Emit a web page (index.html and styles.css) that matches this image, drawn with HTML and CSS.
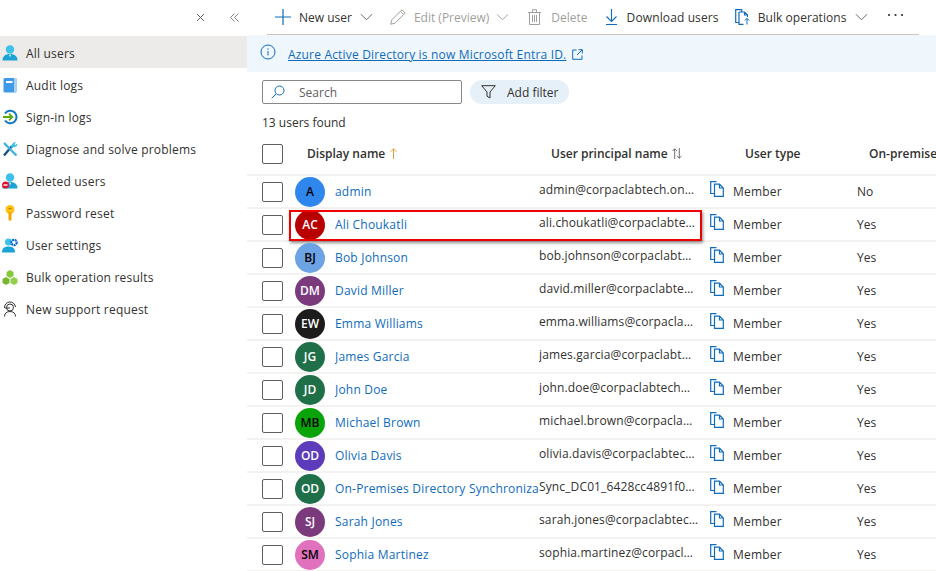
FILE: index.html
```html
<!DOCTYPE html>
<html lang="en">
<head>
<meta charset="utf-8">
<title>Users</title>
<link rel="stylesheet" href="styles.css">
</head>
<body>
<svg class="defs" width="0" height="0" aria-hidden="true">
  <symbol id="copy" viewBox="0 0 14 16"><path d="M4.500 12.500H.7V.7h5.800M4.500 3.200h5l3.800 3.800v8.300H4.500zM9.500 3.200V7h3.800" fill="none" stroke="#0f6cbd" stroke-width="1.200"/></symbol>
  <symbol id="chev" viewBox="0 0 14 8"><path d="M1 1l6 6 6-6" fill="none" stroke="currentColor" stroke-width="1"/></symbol>
  <symbol id="person" viewBox="0 0 16 16"><circle cx="8" cy="4.500" r="4.200" fill="#3cc1e8"/><path d="M.5 15.500c0-4 2.500-6.500 7.500-6.500s7.500 2.500 7.500 6.500z" fill="#1aa3d6"/><path d="M7 9.500h2l-1 3z" fill="#e8f7fc"/></symbol>
</svg>
<div class="app">
  <aside class="side">
    <div class="side-top">
      <svg class="ic-close" width="9" height="9" viewBox="0 0 9 9"><path d="M1 1l7 7M8 1L1 8" stroke="#605e5c" fill="none"/></svg>
      <svg class="ic-collapse" width="9" height="9" viewBox="0 0 9 9"><path d="M4.500.5L.5 4.500l4 4M8.500.5l-4 4 4 4" stroke="#8a8886" fill="none"/></svg>
    </div>
    <nav class="nav">
      <a class="nav-item active"><svg class="nav-ic" viewBox="0 0 16 16"><use href="#person"/></svg>All users</a>
      <a class="nav-item"><svg class="nav-ic" viewBox="0 0 16 16"><rect x="1.500" y="1" width="13" height="14.500" rx="1.500" fill="#3f9be8"/><rect x="12" y="1" width="2.500" height="14.500" fill="#a9d3f5"/><rect x="4" y="4" width="6.500" height="2" fill="#fff"/></svg>Audit logs</a>
      <a class="nav-item"><svg class="nav-ic" viewBox="0 0 16 16"><path d="M3 4.500A6.300 6.300 0 1 1 3 11.500" fill="none" stroke="#0f78c9" stroke-width="2"/><path d="M1 8h9M7 4.700L10.300 8 7 11.300" fill="none" stroke="#5ea80f" stroke-width="1.800"/></svg>Sign-in logs</a>
      <a class="nav-item"><svg class="nav-ic" viewBox="0 0 16 16"><path d="M2 14.500L10 5" stroke="#1b4f8a" stroke-width="2.400"/><path d="M10 7l-1.500-1.800L11.500 1.500l2.500-.5-1.500 2 1 1 2-1.500-.5 2.500z" fill="#3cc1e8"/><path d="M2 2l12.500 12.500" stroke="#3cb4e0" stroke-width="2.400"/></svg>Diagnose and solve problems</a>
      <a class="nav-item"><svg class="nav-ic" viewBox="0 0 16 16"><use href="#person"/><circle cx="3.500" cy="12" r="3.500" fill="#e0122e"/><rect x="1.500" y="11.300" width="4" height="1.400" fill="#fff"/></svg>Deleted users</a>
      <a class="nav-item"><svg class="nav-ic" viewBox="0 0 16 16"><circle cx="8" cy="4.500" r="4.500" fill="#fcc419"/><path d="M6.500 7h3v8l-1.500 1-1.500-1z" fill="#f7a800"/><rect x="6.500" y="2.800" width="3" height="1.400" fill="#b97f00"/></svg>Password reset</a>
      <a class="nav-item"><svg class="nav-ic" viewBox="0 0 16 16"><circle cx="6.500" cy="5" r="3.500" fill="#3cc1e8"/><path d="M0 15.500c0-4 2-6 6.500-6s6.500 2 6.500 6z" fill="#1aa3d6"/><circle cx="12" cy="5.500" r="2.700" fill="none" stroke="#0f6cd4" stroke-width="2.200" stroke-dasharray="2 .6"/></svg>User settings</a>
      <a class="nav-item"><svg class="nav-ic" viewBox="0 0 16 16"><path d="M8 1l3.500 2v4L8 9 4.500 7V3z" fill="#86c83c"/><path d="M4 8l3.500 2v4L4 16 .5 14v-4z" fill="#75b82e"/><path d="M12 8l3.500 2v4L12 16l-3.500-2v-4z" fill="#93d04a"/></svg>Bulk operation results</a>
      <a class="nav-item"><svg class="nav-ic" viewBox="0 0 16 16" fill="none" stroke="#323130"><circle cx="8" cy="6.500" r="3.500"/><path d="M2.500 7A5.500 5.500 0 0 1 13.500 6M2.500 15.500c0-3 2-5 5.500-5s5.500 2 5.500 5M3 7h5"/></svg>New support request</a>
    </nav>
  </aside>
  <main class="main">
    <div class="toolbar">
      <span class="tool t-new"><svg width="16" height="16" viewBox="0 0 16 16"><path d="M8 0v16M0 8h16" stroke="#0f6cbd" stroke-width="1.200"/></svg>New user<svg class="chev" width="13" height="8"><use href="#chev"/></svg></span>
      <span class="tool off t-edit"><svg width="16" height="16" viewBox="0 0 16 16"><path d="M.8 15.200l1-4.500L12 .8l3.200 3.200L5 14.200zM10.500 2.300l3.200 3.200" fill="none" stroke="#a19f9d"/></svg>Edit (Preview)<svg class="chev" width="13" height="8"><use href="#chev"/></svg></span>
      <span class="tool off t-del"><svg width="13" height="16" viewBox="0 0 13 16"><path d="M1.500 3.500h10v12h-10zM0 3.500h13M4.500 3V.7h4V3M4.500 6v7M6.500 6v7M8.500 6v7" fill="none" stroke="#a19f9d"/></svg>Delete</span>
      <span class="tool t-down"><svg width="13" height="16" viewBox="0 0 13 16"><path d="M6.500 0v12M1.500 7.500l5 5 5-5M1 15.500h11" fill="none" stroke="#0f6cbd" stroke-width="1.100"/></svg>Download users</span>
      <span class="tool t-bulk"><svg width="15" height="16" viewBox="0 0 15 16"><path d="M4 13.500H.7V.7h6v2M4 3h5.500l3 3v2M4 3v12.300h4.500M9.500 3v3h3" fill="none" stroke="#0f6cbd" stroke-width="1.200"/><path d="M12 15.500V9.500M9.800 11.500L12 9.300l2.200 2.200" fill="none" stroke="#0f6cbd"/></svg>Bulk operations<svg class="chev" width="13" height="8"><use href="#chev"/></svg></span>
      <svg class="more" width="17" height="4" viewBox="0 0 17 4"><circle cx="2" cy="2" r="1.100" fill="#323130"/><circle cx="8.500" cy="2" r="1.100" fill="#323130"/><circle cx="15" cy="2" r="1.100" fill="#323130"/></svg>
    </div>
    <div class="banner">
      <svg class="info" width="16" height="16" viewBox="0 0 16 16"><circle cx="8" cy="8" r="7" fill="none" stroke="#0f6cbd"/><path d="M8 7v4.500M8 4.300v1.400" stroke="#0f6cbd"/></svg>
      <a class="banner-link">Azure Active Directory is now Microsoft Entra ID.</a>
      <svg width="11" height="11" viewBox="0 0 11 11"><path d="M4.500 1H.7v9.300H10V6.500M5 6l5-5M6.500.7h3.800v3.800" fill="none" stroke="#0f6cbd"/></svg>
    </div>
    <div class="filters">
      <label class="search"><svg width="14" height="14" viewBox="0 0 14 14"><circle cx="8.500" cy="5.500" r="4.500" fill="none" stroke="#0f6cbd"/><path d="M5.200 8.800L.7 13.300" stroke="#0f6cbd"/></svg><span>Search</span></label>
      <span class="pill"><svg width="15" height="14" viewBox="0 0 15 14"><path d="M.7.700h13.600L9 7v6l-3-1.800V7z" fill="none" stroke="#323130"/></svg>Add filter</span>
    </div>
    <div class="count">13 users found</div>
    <div class="head">
      <span class="box"></span>
      <span class="h-name">Display name<svg class="arr" width="7" height="11" viewBox="0 0 7 11"><path d="M3.500 11V.8M.5 3.800l3-3 3 3" fill="none" stroke="#e0a040"/></svg></span>
      <span class="h-upn">User principal name<svg class="arr" width="10" height="11" viewBox="0 0 10 11"><path d="M2.700 11V.8M.5 3l2.200-2.200L4.900 3M7.300 0v10.200M5.100 8l2.200 2.200L9.500 8" fill="none" stroke="#605e5c" stroke-width=".9"/></svg></span>
      <span class="h-type">User type</span>
      <span class="h-prem">On-premises sync enabled</span>
    </div>
    <div class="row"><span class="box"></span><span class="cell-id"><span class="av a-blue">A</span><a>admin</a></span><span class="upn">admin@corpaclabtech.on&#8230;</span><svg class="copy"><use href="#copy"/></svg><span class="type">Member</span><span class="prem">No</span></div>
    <div class="row"><span class="box"></span><span class="cell-id"><span class="av a-red">AC</span><a>Ali Choukatli</a></span><span class="upn">ali.choukatli@corpaclabte&#8230;</span><svg class="copy"><use href="#copy"/></svg><span class="type">Member</span><span class="prem">Yes</span><span class="mark"></span></div>
    <div class="row"><span class="box"></span><span class="cell-id"><span class="av a-sky">BJ</span><a>Bob Johnson</a></span><span class="upn">bob.johnson@corpaclabt&#8230;</span><svg class="copy"><use href="#copy"/></svg><span class="type">Member</span><span class="prem">Yes</span></div>
    <div class="row"><span class="box"></span><span class="cell-id"><span class="av a-plum">DM</span><a>David Miller</a></span><span class="upn">david.miller@corpaclabte&#8230;</span><svg class="copy"><use href="#copy"/></svg><span class="type">Member</span><span class="prem">Yes</span></div>
    <div class="row"><span class="box"></span><span class="cell-id"><span class="av a-black">EW</span><a>Emma Williams</a></span><span class="upn">emma.williams@corpacla&#8230;</span><svg class="copy"><use href="#copy"/></svg><span class="type">Member</span><span class="prem">Yes</span></div>
    <div class="row"><span class="box"></span><span class="cell-id"><span class="av a-green">JG</span><a>James Garcia</a></span><span class="upn">james.garcia@corpaclabt&#8230;</span><svg class="copy"><use href="#copy"/></svg><span class="type">Member</span><span class="prem">Yes</span></div>
    <div class="row"><span class="box"></span><span class="cell-id"><span class="av a-green">JD</span><a>John Doe</a></span><span class="upn">john.doe@corpaclabtech&#8230;</span><svg class="copy"><use href="#copy"/></svg><span class="type">Member</span><span class="prem">Yes</span></div>
    <div class="row"><span class="box"></span><span class="cell-id"><span class="av a-lime">MB</span><a>Michael Brown</a></span><span class="upn">michael.brown@corpacla&#8230;</span><svg class="copy"><use href="#copy"/></svg><span class="type">Member</span><span class="prem">Yes</span></div>
    <div class="row"><span class="box"></span><span class="cell-id"><span class="av a-purple">OD</span><a>Olivia Davis</a></span><span class="upn">olivia.davis@corpaclabtec&#8230;</span><svg class="copy"><use href="#copy"/></svg><span class="type">Member</span><span class="prem">Yes</span></div>
    <div class="row"><span class="box"></span><span class="cell-id"><span class="av a-green">OD</span><a>On-Premises Directory Synchronization Service Account</a></span><span class="upn">Sync_DC01_6428cc4891f0&#8230;</span><svg class="copy"><use href="#copy"/></svg><span class="type">Member</span><span class="prem">Yes</span></div>
    <div class="row"><span class="box"></span><span class="cell-id"><span class="av a-plum">SJ</span><a>Sarah Jones</a></span><span class="upn">sarah.jones@corpaclabtec&#8230;</span><svg class="copy"><use href="#copy"/></svg><span class="type">Member</span><span class="prem">Yes</span></div>
    <div class="row"><span class="box"></span><span class="cell-id"><span class="av a-pink">SM</span><a>Sophia Martinez</a></span><span class="upn">sophia.martinez@corpacl&#8230;</span><svg class="copy"><use href="#copy"/></svg><span class="type">Member</span><span class="prem">Yes</span></div>
  </main>
</div>
</body>
</html>
```
FILE: styles.css
```css
* { box-sizing: border-box; }
html, body { margin: 0; height: 100%; overflow: hidden; background: #fff; }
body { font-family: "Open Sans", "Noto Sans", sans-serif; font-size: 12px; color: #323130; }
.defs { position: absolute; }
.app { display: flex; height: 571px; width: 936px; overflow: hidden; }

.side { flex: 0 0 247px; }
.side-top { height: 36px; display: flex; align-items: center; justify-content: flex-end; padding: 0 8px 2px 0; gap: 25px; }
.nav { display: flex; flex-direction: column; }
.nav-item { display: flex; align-items: center; height: 32px; padding: 2px 0 0 2px; gap: 8px; white-space: nowrap; letter-spacing: .2px; }
.nav-item.active { background: #edebe9; }
.nav-ic { width: 16px; height: 16px; flex: none; }

.main { flex: 1; min-width: 0; overflow: hidden; }
.toolbar { height: 35px; margin: 0 17px 0 20px; padding-left: 8px; border-bottom: 1px solid #c8c6c4; display: flex; align-items: center; white-space: nowrap; }
.tool { display: flex; align-items: center; gap: 8px; }
.tool.off { color: #a19f9d; }
.chev { color: #605e5c; }
.off .chev { color: #a19f9d; }
.t-edit { margin-left: 17px; }
.t-edit .chev { margin-left: -1px; }
.t-del { margin-left: 19px; gap: 10px; }
.t-down { margin-left: 17px; gap: 9px; letter-spacing: .12px; }
.t-bulk { margin-left: 16px; letter-spacing: .05px; }
.t-bulk .chev { margin-left: 1px; }
.more { margin-left: 19px; position: relative; top: -2px; }

.banner { height: 37px; background: #eff6fc; display: flex; align-items: center; padding: 2px 0 0 13px; gap: 6px; }
.info { margin-right: 6px; position: relative; top: -3px; }
.banner-link { color: #0f6cbd; text-decoration: underline; letter-spacing: .18px; }

.filters { display: flex; gap: 8px; margin: 8px 0 0 15px; }
.search { width: 200px; height: 24px; border: 1px solid #8a8886; border-radius: 2px; display: flex; align-items: center; padding-left: 8px; gap: 14px; color: #605e5c; }
.pill { width: 99px; height: 24px; border-radius: 12px; background: #e6f0f9; display: flex; align-items: center; padding-left: 11px; gap: 11px; }
.count { margin: 10px 0 0 15px; height: 18px; line-height: 18px; }

.head, .row { display: grid; grid-template-columns: 15px 33px 244px 171px 23px 124px 1fr; align-items: center; white-space: nowrap; }
.head { height: 42px; margin-top: 2px; padding-bottom: 1px; font-weight: 600; border-bottom: 2px solid #f3f2f1; }
.box { grid-column: 2; width: 21px; height: 20px; border: 1px solid #605e5c; border-radius: 2px; background: #fff; }
.head .h-name { grid-column: 3; padding-left: 12px; display: flex; align-items: center; gap: 5px; }
.head .h-upn { grid-column: 4 / 6; padding-left: 12px; display: flex; align-items: center; gap: 4px; }
.head .h-type { grid-column: 6; padding-left: 12px; }
.head .h-prem { grid-column: 7; padding-left: 12px; overflow: hidden; }

.row { height: 33px; border-bottom: 2px solid #f3f2f1; position: relative; }
.cell-id { grid-column: 3; display: flex; align-items: center; gap: 10px; min-width: 0; overflow: hidden; }
.cell-id a { color: #0f6cbd; overflow: hidden; letter-spacing: .2px; }
.av { flex: none; width: 30px; height: 30px; border-radius: 50%; display: flex; align-items: center; justify-content: center; font-weight: 600; color: #fff; }
.a-blue { background: #2f87ee; color: #000; }
.a-red { background: #b80000; }
.a-sky { background: #6ba3e5; color: #000; }
.a-plum { background: #7b3a7c; }
.a-black { background: #1c1c1c; }
.a-green { background: #1f7048; }
.a-lime { background: #0aa30a; color: #000; }
.a-purple { background: #5c3cbb; }
.a-pink { background: #e271bd; color: #000; }
.upn { grid-column: 4; overflow: hidden; position: relative; top: -2px; letter-spacing: .13px; }
.copy { grid-column: 5; width: 14px; height: 16px; position: relative; top: -3px; }
.type { grid-column: 6; letter-spacing: .2px; }
.prem { grid-column: 7; }
.mark { position: absolute; left: 42px; top: 1px; width: 413px; height: 31px; border: 2px solid #ee0000; box-shadow: 1px 2px 3px rgba(0,0,0,.45); pointer-events: none; }
```
